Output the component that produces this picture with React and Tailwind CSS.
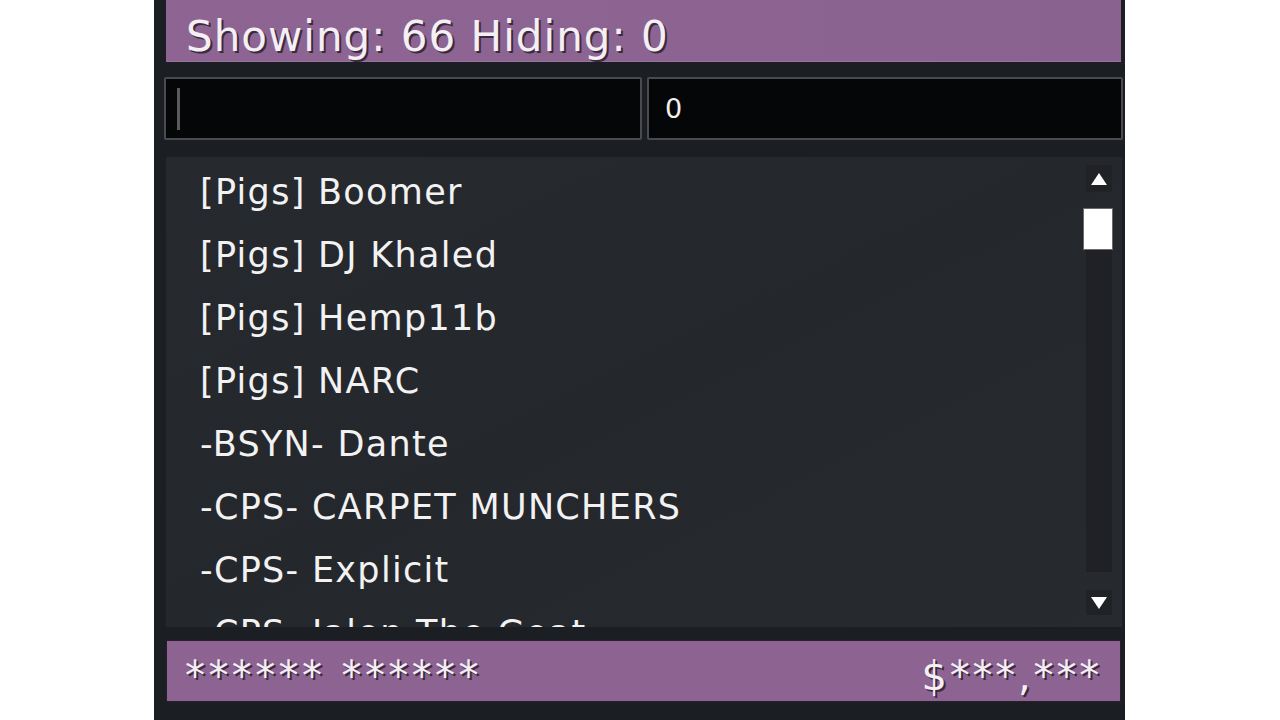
export default function App() {
  const rows = [
    "[Pigs] Boomer",
    "[Pigs] DJ Khaled",
    "[Pigs] Hemp11b",
    "[Pigs] NARC",
    "-BSYN- Dante",
    "-CPS- CARPET MUNCHERS",
    "-CPS- Explicit",
    "-CPS- Jalen The Goat",
  ];
  const font = { fontFamily: '"DejaVu Sans", sans-serif' };
  return (
    <div className="w-[1280px] h-[720px] bg-white flex overflow-hidden" style={font}>
      <div className="ml-[154px] w-[971px] h-full bg-[#1b1e23] flex flex-col pl-[12px]">
        <div className="h-[62px] w-[955px] bg-gradient-to-r from-[#8e6592] to-[#8a6290] border-b border-[#9a70a0] flex items-center pl-[20px]">
          <span className="text-[42px] leading-none text-[#f4eef5] [text-shadow:2px_2px_0_#3b2a3e] mt-[12px] tracking-[1px]">
            Showing: 66 Hiding: 0
          </span>
        </div>
        <div className="mt-[15px] flex gap-[5px] ml-[-2px]">
          <div className="w-[478px] h-[63px] bg-[#050608] border-2 border-[#4a4b4e] rounded-[2px] flex items-center pl-[11px]">
            <div className="w-[3px] h-[42px] bg-[#5a5b5e]" />
          </div>
          <div className="w-[476px] h-[63px] bg-[#050608] border-2 border-[#4a4b4e] rounded-[2px] flex items-center pl-[16px]">
            <span className="text-[27px] text-[#f0f0f0] leading-none">0</span>
          </div>
        </div>
        <div className="mt-[17px] w-[956px] h-[470px] bg-gradient-to-br from-[#26292e] via-[#24272c] to-[#272a2f] flex overflow-hidden">
          <div className="flex-1 flex flex-col pt-[4px] pl-[34px]">
            {rows.map((r) => (
              <div key={r} className="h-[63px] shrink-0 flex items-center">
                <span className="text-[35px] leading-none text-[#f2f2f2] whitespace-nowrap tracking-[1.3px]">{r}</span>
              </div>
            ))}
          </div>
          <div className="w-[26px] mr-[10px] flex flex-col pt-[8px]">
            <div className="h-[27px] bg-[#202226] flex items-center justify-center">
              <svg width="18" height="14" viewBox="0 0 18 14"><path d="M9 1 L17 13 L1 13 Z" fill="#ffffff" /></svg>
            </div>
            <div className="h-[16px]" />
            <div className="w-[30px] ml-[-3px] h-[42px] bg-white border border-[#6a6a6a]" />
            <div className="h-[322px] bg-[#1f2126]" />
            <div className="mt-[18px] h-[25px] bg-[#202226] flex items-center justify-center">
              <svg width="18" height="14" viewBox="0 0 18 14"><path d="M1 1 L17 1 L9 13 Z" fill="#ffffff" /></svg>
            </div>
          </div>
        </div>
        <div className="mt-[13px] h-[62px] w-[955px] bg-[#8c6391] border border-[#2a1e2c] flex items-center justify-between pl-[18px] pr-[18px]">
          <span className="text-[40px] leading-none text-[#f4eef5] [text-shadow:2px_2px_0_#3b2a3e] mt-[10px] tracking-[3.4px]">****** ******</span>
          <span className="text-[40px] leading-none text-[#f4eef5] [text-shadow:2px_2px_0_#3b2a3e] mt-[10px] tracking-[2.8px]">$***,***</span>
        </div>
      </div>
    </div>
  );
}
